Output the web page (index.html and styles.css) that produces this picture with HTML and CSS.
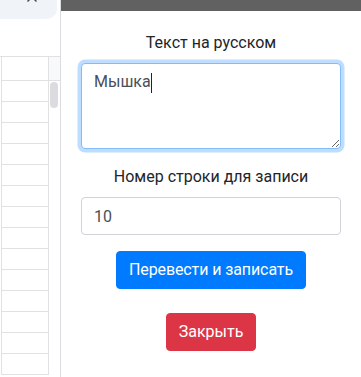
FILE: index.html
```html
<!DOCTYPE html>
<html lang="ru">
<head>
  <meta charset="UTF-8" />
  <meta name="viewport" content="width=device-width, initial-scale=1" />
  <title>Перевод</title>
  <link rel="stylesheet" href="styles.css">
</head>
<body>

  <!-- лист таблицы за боковой панелью -->
  <div class="sheet">
    <div class="sheet-top">
      <div class="tab">
        <svg class="tab-close" width="12" height="12" viewBox="0 0 12 12">
          <path d="M1.5 1.5 L10.5 10.5 M10.5 1.5 L1.5 10.5" stroke="#444746" stroke-width="1.4" fill="none" />
        </svg>
      </div>
    </div>
    <div class="grid">
      <div class="cells">
        <div class="cell cell-head"></div>
        <div class="cell"></div>
        <div class="cell"></div>
        <div class="cell"></div>
        <div class="cell"></div>
        <div class="cell"></div>
        <div class="cell"></div>
        <div class="cell"></div>
        <div class="cell"></div>
        <div class="cell"></div>
        <div class="cell"></div>
        <div class="cell"></div>
        <div class="cell"></div>
        <div class="cell"></div>
        <div class="cell"></div>
      </div>
      <div class="scroll">
        <div class="scroll-head"></div>
        <div class="scroll-thumb"></div>
      </div>
    </div>
  </div>

  <!-- боковая панель -->
  <div class="panel">
    <div class="panel-bar"></div>
    <div class="panel-body">
      <div class="form-group">
        <label class="label" for="ruText">Текст на русском</label>
        <div class="area-wrap">
          <textarea id="ruText" class="form-control area is-focus" rows="3">Мышка</textarea>
          <span class="caret"></span>
        </div>
      </div>
      <div class="form-group">
        <label class="label" for="rowNum">Номер строки для записи</label>
        <input type="number" id="rowNum" class="form-control" value="10">
      </div>
      <button class="btn btn-primary">Перевести и записать</button>
      <button class="btn btn-danger btn-close">Закрыть</button>
    </div>
  </div>

</body>
</html>
```

FILE: styles.css
```css
body {
  margin: 0;
  height: 377px;
  overflow: hidden;
  display: flex;
  background: #fff;
  font-family: "Segoe UI", Roboto, "Noto Sans", sans-serif;
  font-size: 16px;
  line-height: 1.5;
  color: #212529;
}

/* лист */
.sheet {
  width: 60px;
  flex-shrink: 0;
  border-right: 1px solid #dadce0;
}

.sheet-top {
  height: 56px;
}

.tab {
  position: relative;
  width: 57px;
  height: 19px;
  background: #f0f4f9;
  border-bottom-right-radius: 10px;
}

.tab-close {
  position: absolute;
  left: 26px;
  top: -9px;
}

.grid {
  display: flex;
  border-top: 1px solid #e1e1e1;
}

.cells {
  width: 46px;
  margin-left: 1px;
  border-left: 1px solid #e1e1e1;
}

.cell {
  height: 20px;
  border-bottom: 1px solid #e1e1e1;
}

.cell-head {
  height: 23px;
}

.scroll {
  width: 11px;
  border-left: 1px solid #e1e1e1;
}

.scroll-head {
  height: 23px;
  background: #f8f9fa;
  border-bottom: 1px solid #e1e1e1;
}

.scroll-thumb {
  width: 8px;
  height: 26px;
  margin: 1px 0 0 1px;
  background: #dadce0;
  border-radius: 4px;
}

/* панель */
.panel {
  width: 300px;
  flex-shrink: 0;
}

.panel-bar {
  height: 11px;
  background: #616161;
}

.panel-body {
  padding: 20px 20px 0;
  text-align: center;
}

.form-group {
  margin-bottom: 16px;
}

.label {
  display: block;
  margin-bottom: 8px;
}

.form-control {
  display: block;
  width: 100%;
  box-sizing: border-box;
  height: 38px;
  padding: 6px 12px;
  font-family: inherit;
  font-size: 16px;
  line-height: 1.5;
  color: #495057;
  background: #fff;
  border: 1px solid #ced4da;
  border-radius: 4px;
  margin: 0;
}

.area-wrap {
  position: relative;
}

.area {
  height: 86px;
  resize: vertical;
}

.is-focus {
  border-color: #80bdff;
  outline: none;
  box-shadow: 0 0 0 3.5px rgba(0, 123, 255, 0.25);
}

.caret {
  position: absolute;
  left: 70px;
  top: 10px;
  width: 1px;
  height: 20px;
  background: #212529;
}

.btn {
  display: inline-block;
  padding: 6px 12px;
  font-family: inherit;
  font-size: 16px;
  line-height: 1.5;
  color: #fff;
  border: 1px solid transparent;
  border-radius: 4px;
  cursor: pointer;
}

.btn-primary {
  background: #007bff;
  border-color: #007bff;
  letter-spacing: -0.1px;
}

.btn-danger {
  background: #dc3545;
  border-color: #dc3545;
}

.btn-close {
  display: block;
  margin: 24px auto 0;
}
```
